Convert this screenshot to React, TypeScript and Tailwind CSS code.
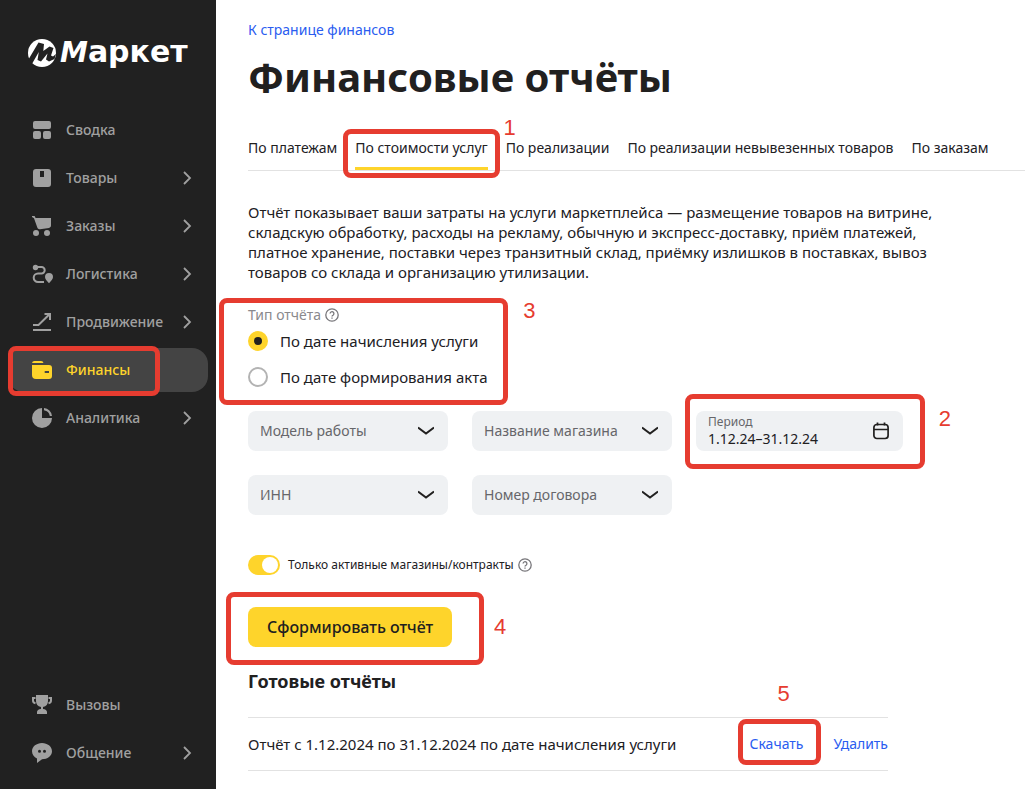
import { useState, type ReactNode } from "react";
import clsx from "clsx";

type NavItem = {
  label: string;
  icon: ReactNode;
  expandable?: boolean;
  active?: boolean;
};

function Icon({ children }: { children: ReactNode }) {
  return (
    <svg viewBox="0 0 20 20" className="size-5 shrink-0 overflow-visible" fill="currentColor" aria-hidden="true">
      {children}
    </svg>
  );
}

const mainNav: NavItem[] = [
  {
    label: "Сводка",
    icon: (
      <Icon>
        <rect x="1" y="1" width="18" height="8" rx="2" />
        <rect x="1" y="11" width="8" height="8" rx="2" />
        <rect x="11" y="11" width="8" height="8" rx="2" />
      </Icon>
    ),
  },
  {
    label: "Товары",
    expandable: true,
    icon: (
      <Icon>
        <path
          fillRule="evenodd"
          d="M4 1h12a3 3 0 0 1 3 3v12a3 3 0 0 1-3 3H4a3 3 0 0 1-3-3V4a3 3 0 0 1 3-3Zm4 2v6h4V3H8Z"
        />
      </Icon>
    ),
  },
  {
    label: "Заказы",
    expandable: true,
    icon: (
      <Icon>
        <path d="M0 0h2.600l1 2H19v7.500c0 1.300-.8 2.200-2 2.400l-9 1.300c-1.200.2-2.300-.4-2.700-1.600L2 2.200 0 1Z" />
        <circle cx="4" cy="17" r="3" />
        <circle cx="15" cy="17" r="3" />
      </Icon>
    ),
  },
  {
    label: "Логистика",
    expandable: true,
    icon: (
      <Icon>
        <circle cx="3.500" cy="3.500" r="2.700" />
        <path
          d="M4 3h5.500a3.200 3.200 0 0 1 0 6.400H6a4 4 0 0 0 0 8.600h6"
          fill="none"
          stroke="currentColor"
          strokeWidth="2"
        />
        <path d="M17 9a4 4 0 0 1 4 4c0 2.300-1.800 3.800-4 6.200-2.200-2.400-4-3.900-4-6.200a4 4 0 0 1 4-4Z" />
      </Icon>
    ),
  },
  {
    label: "Продвижение",
    expandable: true,
    icon: (
      <Icon>
        <path
          d="M1 18h18M1 13h5.500L18 1.800M12.500 2H18v6"
          fill="none"
          stroke="currentColor"
          strokeWidth="2"
        />
      </Icon>
    ),
  },
  {
    label: "Финансы",
    active: true,
    icon: (
      <Icon>
        <path d="M0 3a2.500 2.500 0 0 1 2.500-2H9a2.500 2.500 0 0 1 2.500 2H0Z" />
        <path
          fillRule="evenodd"
          d="M0 5h17a3 3 0 0 1 3 3v8a3 3 0 0 1-3 3H4a4 4 0 0 1-4-4V5Zm13.500 6a1 1 0 0 0 0 2H17v-2h-3.500Z"
        />
      </Icon>
    ),
  },
  {
    label: "Аналитика",
    expandable: true,
    icon: (
      <Icon>
        <path d="M10 0v10h10A10 10 0 1 1 10 0Z" />
        <path d="M12 0a9 9 0 0 1 8 8h-2.200A7 7 0 0 0 12 2.200Z" />
      </Icon>
    ),
  },
];

const bottomNav: NavItem[] = [
  {
    label: "Вызовы",
    icon: (
      <Icon>
        <path d="M4 0h12v6a6 6 0 0 1-5 5.900V14c2.500.2 4 1.500 4 3v2H5v-2c0-1.500 1.500-2.800 4-3v-2.100A6 6 0 0 1 4 6V0Z" />
        <path
          d="M3.500 3H1v2.500C1 7 2 8 3.500 8.300M16.500 3H19v2.500c0 1.500-1 2.500-2.500 2.800"
          fill="none"
          stroke="currentColor"
          strokeWidth="2"
        />
      </Icon>
    ),
  },
  {
    label: "Общение",
    expandable: true,
    icon: (
      <Icon>
        <path
          fillRule="evenodd"
          d="M10 0c5.500 0 10 3.600 10 8.200s-4.500 8-10 8L5 20v-4.600C2 14 0 11.400 0 8.200 0 3.600 4.500 0 10 0ZM7.500 6.700a1.500 1.500 0 1 0 0 3 1.500 1.500 0 0 0 0-3Zm5 0a1.500 1.500 0 1 0 0 3 1.500 1.500 0 0 0 0-3Z"
        />
      </Icon>
    ),
  },
];

const tabs = [
  "По платежам",
  "По стоимости услуг",
  "По реализации",
  "По реализации невывезенных товаров",
  "По заказам",
];

// Red frame drawn over a control, placed relative to the control itself
function Frame({ className }: { className: string }) {
  return (
    <span
      className={clsx(
        "pointer-events-none absolute z-10 rounded-lg border-5 border-[#e63c30]",
        className,
      )}
    />
  );
}

function Step({ n, className }: { n: number; className: string }) {
  return (
    <span
      className={clsx(
        "pointer-events-none absolute z-10 font-['Liberation_Sans',sans-serif] text-[22px] leading-4 font-normal text-[#e63c30]",
        className,
      )}
    >
      {n}
    </span>
  );
}

function Help() {
  return (
    <button type="button" aria-label="Подсказка" className="text-[#77767a]">
      <svg
        viewBox="0 0 14 14"
        className="size-3.5"
        fill="none"
        stroke="currentColor"
        strokeWidth="1.300"
        aria-hidden="true"
      >
        <circle cx="7" cy="7" r="6.200" />
        <path d="M5.100 5.600a1.900 1.900 0 1 1 2.900 1.600c-.7.400-1 .7-1 1.300" />
        <path d="M7 9.500v1.300" />
      </svg>
    </button>
  );
}

function Logo() {
  return (
    <a href="#" className="flex items-center gap-1 pl-7 text-white">
      <svg viewBox="0 0 28 28" className="size-7 shrink-0" aria-hidden="true">
        <circle cx="14" cy="14" r="14" fill="#fff" />
        <path
          d="M-1 23 10.500 3.500 16 5l-.7 7 6.200-4.500 4 1.500-2.500 7.500 2 1 3-2.500-1.500 5-5.500 2.500-3-2 1.500-6-6.500 8-3.500-1.500 1.300-8L4.500 24H0Z"
          fill="#212121"
        />
      </svg>
      <span className="flex items-baseline font-['DejaVu_Sans',sans-serif] text-[30px] leading-8 font-bold">
        <span className="text-[28px] italic">М</span>аркет
      </span>
    </a>
  );
}

function NavList({ items }: { items: NavItem[] }) {
  return (
    <ul className="flex flex-col gap-1">
      {items.map((item) => (
        <li key={item.label} className="relative">
          <a
            href="#"
            className={clsx(
              "flex h-11 items-center gap-3.5 rounded-2xl pr-4 pl-6 text-sm font-medium",
              item.active ? "bg-[#444] text-[#fed42b]" : "text-[#a0a0a0]",
            )}
          >
            {item.icon}
            <span className="flex-1">{item.label}</span>
            {item.expandable && (
              <svg
                viewBox="0 0 10 14"
                className="h-3.5 w-2.5 shrink-0"
                fill="none"
                stroke="currentColor"
                strokeWidth="1.800"
                aria-hidden="true"
              >
                <path d="m2 1 6 6-6 6" />
              </svg>
            )}
          </a>
          {item.active && <Frame className="-top-0.5 right-12 -bottom-1 left-0" />}
        </li>
      ))}
    </ul>
  );
}

function SelectField({ label }: { label: string }) {
  return (
    <div className="relative">
      <select
        aria-label={label}
        className="h-10 w-full appearance-none rounded-lg bg-[#eff1f3] pr-10 pl-3 text-sm text-[#66666a]"
      >
        <option>{label}</option>
      </select>
      <svg
        viewBox="0 0 16 16"
        className="pointer-events-none absolute top-3 right-3.5 size-4"
        fill="none"
        stroke="#21201f"
        strokeWidth="2"
        aria-hidden="true"
      >
        <path d="m0 4.500 8 6 8-6" />
      </svg>
    </div>
  );
}

function PeriodField() {
  return (
    <div className="relative">
      <div className="flex h-10 items-center rounded-lg bg-[#eff1f3] pr-3.5 pl-3">
        <div className="min-w-0 flex-1">
          <label htmlFor="period" className="block text-xs leading-4 text-[#66666a]">
            Период
          </label>
          <input
            id="period"
            defaultValue="1.12.24–31.12.24"
            className="block h-[18px] w-full bg-transparent text-sm text-[#21201f] outline-none"
          />
        </div>
        <button type="button" aria-label="Открыть календарь">
          <svg
            viewBox="0 0 16 18"
            className="h-[18px] w-4"
            fill="none"
            stroke="#21201f"
            strokeWidth="1.700"
            aria-hidden="true"
          >
            <rect x=".900" y="2.500" width="14.200" height="14" rx="3" />
            <path d="M1 7.500h14M4.500.500v3M11.500.500v3" />
          </svg>
        </button>
      </div>
      <Frame className="-top-[17px] -right-[22px] -bottom-[18px] -left-[11px]" />
      <Step n={2} className="top-0 -right-12" />
    </div>
  );
}

function ReportType() {
  const [type, setType] = useState("accrual");
  const options = [
    { id: "accrual", label: "По дате начисления услуги" },
    { id: "act", label: "По дате формирования акта" },
  ];

  return (
    <div role="radiogroup" aria-labelledby="report-type" className="relative mt-[23px] w-fit">
      <div className="flex items-center gap-1 text-sm leading-5 text-[#8a898d]">
        <span id="report-type">Тип отчёта</span>
        <Help />
      </div>
      <div className="mt-1 flex flex-col gap-3">
        {options.map((o) => (
          <label key={o.id} className="flex h-6 items-center gap-3 text-[15px]">
            <input
              type="radio"
              name="type"
              checked={type === o.id}
              onChange={() => setType(o.id)}
              className="size-5 appearance-none rounded-full border-2 border-[#b3b3b3] bg-white checked:border-6 checked:border-[#fed42b] checked:bg-[#21201f]"
            />
            {o.label}
          </label>
        ))}
      </div>
      <Frame className="-top-[7px] -right-5 -bottom-4 -left-[29px]" />
      <Step n={3} className="-top-0.5 -right-12" />
    </div>
  );
}

function Sidebar() {
  return (
    <aside className="flex w-54 shrink-0 flex-col bg-[#212121] pt-9 pb-3.5">
      <Logo />
      <nav className="mt-[39px] flex flex-1 flex-col justify-between px-2">
        <NavList items={mainNav} />
        <NavList items={bottomNav} />
      </nav>
    </aside>
  );
}

export default function App() {
  const [tab, setTab] = useState(1);

  return (
    <div className="flex min-h-screen bg-white font-['Noto_Sans',sans-serif] text-[#21201f]">
      <Sidebar />
      <main className="min-w-0 flex-1 overflow-hidden pt-5 pl-8">
        <a href="#" className="block w-fit text-sm leading-5 text-[#2a5cf0]">
          К странице финансов
        </a>
        <h1 className="mt-3 text-[40px] leading-[50px] font-bold">Финансовые отчёты</h1>

        <div role="tablist" className="mt-9 flex gap-[18px] border-b border-[#e2e2e2] text-sm">
          {tabs.map((t, i) => (
            <div key={t} className="relative">
              <button
                type="button"
                role="tab"
                aria-selected={tab === i}
                onClick={() => setTab(i)}
                className={clsx(
                  "block border-b-3 pb-[9px] leading-5 whitespace-nowrap",
                  tab === i ? "border-[#fed42b]" : "border-transparent",
                )}
              >
                {t}
              </button>
              {i === 1 && (
                <>
                  <Frame className="-top-[9px] -right-3 -bottom-2 -left-3" />
                  <Step n={1} className="-top-[18px] -right-7" />
                </>
              )}
            </div>
          ))}
        </div>

        <p className="mt-[31px] max-w-[712px] text-[15px] leading-5">
          Отчёт показывает ваши затраты на услуги маркетплейса — размещение товаров на витрине,
          складскую обработку, расходы на рекламу, обычную и экспресс-доставку, приём платежей,
          платное хранение, поставки через транзитный склад, приёмку излишков в поставках, вывоз
          товаров со склада и организацию утилизации.
        </p>

        <ReportType />

        <div className="mt-[22px] grid grid-cols-[200px_200px_207px] gap-6">
          <SelectField label="Модель работы" />
          <SelectField label="Название магазина" />
          <PeriodField />
          <SelectField label="ИНН" />
          <SelectField label="Номер договора" />
        </div>

        <div className="mt-10 flex h-5 items-center gap-1 text-xs">
          <label className="flex items-center gap-2">
            <input
              type="checkbox"
              role="switch"
              defaultChecked
              className="flex h-5 w-8 appearance-none rounded-full bg-[#c4c4c4] p-0.5 before:size-4 before:rounded-full before:bg-white checked:justify-end checked:bg-[#fed42b]"
            />
            Только активные магазины/контракты
          </label>
          <Help />
        </div>

        <div className="relative mt-8 w-fit">
          <button
            type="button"
            className="block h-10 rounded-lg bg-[#fed42b] px-[19px] text-base font-medium"
          >
            Сформировать отчёт
          </button>
          <Frame className="-top-[15px] -right-8 -bottom-[18px] -left-[22px]" />
          <Step n={4} className="top-3 -right-13.5" />
        </div>

        <h2 className="mt-5 text-lg leading-7 font-bold">Готовые отчёты</h2>
        <table className="mt-[22px] w-full max-w-[640px] border-collapse border-y border-[#e2e2e2]">
          <tbody>
            <tr className="h-[53px]">
              <td className="text-[15px]">Отчёт с 1.12.2024 по 31.12.2024 по дате начисления услуги</td>
              <td className="text-sm">
                <div className="flex justify-end gap-[30px] leading-5 text-[#2a5cf0]">
                  <div className="relative">
                    <a href="#">Скачать</a>
                    <Frame className="-top-[15px] -right-[18px] -bottom-[11px] -left-3" />
                    <Step n={5} className="-top-12 left-7" />
                  </div>
                  <a href="#">Удалить</a>
                </div>
              </td>
            </tr>
          </tbody>
        </table>
      </main>
    </div>
  );
}
